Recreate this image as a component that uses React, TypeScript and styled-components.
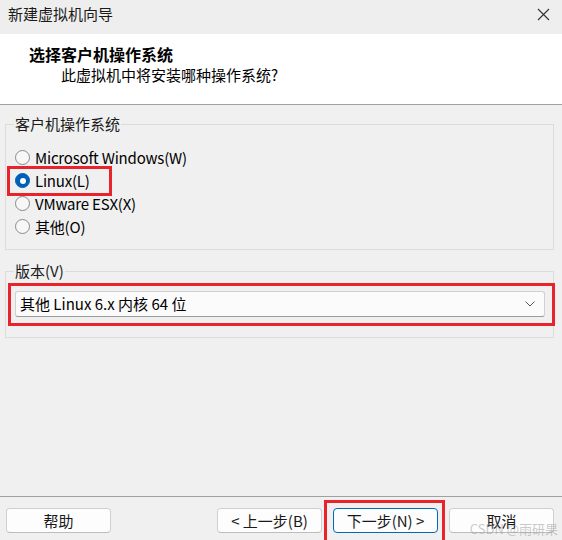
import React from "react";
import styled, { createGlobalStyle } from "styled-components";

const GlobalStyle = createGlobalStyle`
  html, body {
    margin: 0;
    padding: 0;
    background: #f0f0f0;
  }
  body {
    font-family: "Noto Sans CJK SC", "Noto Sans", sans-serif;
    color: #000;
  }
`;

const Window = styled.div`
  position: relative;
  width: 562px;
  height: 540px;
  overflow: hidden;
  display: flex;
  flex-direction: column;
  background: #f0f0f0;
  font-size: 15px;
`;

const TitleBar = styled.div`
  height: 34px;
  box-sizing: border-box;
  padding: 4px 12px 0 8px;
  display: flex;
  align-items: flex-start;
  justify-content: space-between;
  background: #eeeeee;
`;

const TitleText = styled.div`
  line-height: 20px;
  font-size: 15px;
  color: #1a1a1a;
`;

const CloseIcon = styled.svg`
  margin-top: 4px;
  width: 13px;
  height: 13px;
`;

const Header = styled.div`
  height: 71px;
  box-sizing: border-box;
  background: #ffffff;
  border-bottom: 1px solid #a0a0a0;
  padding: 10px 0 0 29px;
  display: flex;
  flex-direction: column;
  gap: 1px;
`;

const Heading = styled.div`
  font-size: 16px;
  font-weight: 700;
  line-height: 20px;
`;

const Subtitle = styled.div`
  line-height: 20px;
  padding-left: 32px;
`;

const Body = styled.div`
  flex: 1;
  padding: 9px 8px 0 5px;
  display: flex;
  flex-direction: column;
  gap: 11px;
`;

const Group = styled.fieldset<{ $padBottom: number }>`
  margin: 0;
  padding: 0 0 ${(p) => p.$padBottom}px 0;
  border: 1px solid #dcdcdc;
  border-radius: 0;
  min-width: 0;
`;

const Legend = styled.legend`
  margin-left: 8px;
  padding: 0 1px;
  line-height: 20px;
  color: #1a1a1a;
`;

const RadioList = styled.div`
  padding-top: 12px;
  display: flex;
  flex-direction: column;
`;

const RadioRow = styled.label`
  position: relative;
  height: 23px;
  display: flex;
  align-items: center;
  gap: 5px;
  padding-left: 9px;
  width: fit-content;
  line-height: 20px;
  letter-spacing: -0.2px;
`;

const RadioCircle = styled.span<{ $checked?: boolean }>`
  flex-shrink: 0;
  width: 15px;
  height: 15px;
  box-sizing: border-box;
  border-radius: 50%;
  border: 1px solid ${(p) => (p.$checked ? "#005fb8" : "#8a8a8a")};
  background: ${(p) => (p.$checked ? "#005fb8" : "#f7f7f7")};
  display: flex;
  align-items: center;
  justify-content: center;
  &::after {
    content: "";
    display: ${(p) => (p.$checked ? "block" : "none")};
    width: 6px;
    height: 6px;
    border-radius: 50%;
    background: #ffffff;
  }
`;

const RedMark = styled.span<{ $l: number; $t: number; $r: number; $b: number }>`
  position: absolute;
  left: ${(p) => p.$l}px;
  top: ${(p) => p.$t}px;
  right: ${(p) => p.$r}px;
  bottom: ${(p) => p.$b}px;
  border: 3px solid #e8232b;
  pointer-events: none;
`;

const LinuxMark = styled.span`
  position: absolute;
  left: 1px;
  top: -3px;
  width: 105px;
  bottom: -4px;
  box-sizing: border-box;
  border: 3px solid #e8232b;
  pointer-events: none;
`;

const ComboWrap = styled.div`
  position: relative;
  margin: 10px 8px 0 9px;
`;

const Combo = styled.div`
  height: 26px;
  box-sizing: border-box;
  border: 1px solid #d0d0d0;
  border-bottom-color: #9a9a9a;
  border-radius: 3px;
  background: #fbfbfb;
  display: flex;
  align-items: center;
  justify-content: space-between;
  padding: 0 9px 0 4px;
  line-height: 20px;
`;

const Chevron = styled.svg`
  width: 10px;
  height: 6px;
`;

const Footer = styled.div`
  height: 44px;
  box-sizing: border-box;
  border-top: 1px solid #a0a0a0;
  padding: 11px 8px 0 6px;
  display: flex;
  align-items: flex-start;
`;

const Spacer = styled.div`
  flex: 1;
`;

const Button = styled.button<{ $primary?: boolean; $gap?: number }>`
  position: relative;
  width: 105px;
  height: 25px;
  margin-left: ${(p) => p.$gap ?? 0}px;
  box-sizing: border-box;
  border: 1px solid ${(p) => (p.$primary ? "#0067c0" : "#d0d0d0")};
  border-bottom-color: ${(p) => (p.$primary ? "#0067c0" : "#bdbdbd")};
  border-radius: 4px;
  background: #fdfdfd;
  font-family: inherit;
  font-size: 15px;
  line-height: 20px;
  color: #1a1a1a;
  padding: 0;
  display: flex;
  align-items: center;
  justify-content: center;
`;

const Watermark = styled.div`
  position: absolute;
  right: 4px;
  bottom: 3px;
  font-size: 13px;
  line-height: 16px;
  color: rgba(150, 150, 150, 0.5);
  pointer-events: none;
`;

const options = [
  { label: "Microsoft Windows(W)", checked: false },
  { label: "Linux(L)", checked: true },
  { label: "VMware ESX(X)", checked: false },
  { label: "其他(O)", checked: false },
];

export default function App() {
  return (
    <>
      <GlobalStyle />
      <Window>
        <TitleBar>
          <TitleText>新建虚拟机向导</TitleText>
          <CloseIcon viewBox="0 0 13 13">
            <path d="M1 1 L12 12 M12 1 L1 12" stroke="#333" strokeWidth="1.1" fill="none" />
          </CloseIcon>
        </TitleBar>
        <Header>
          <Heading>选择客户机操作系统</Heading>
          <Subtitle>此虚拟机中将安装哪种操作系统?</Subtitle>
        </Header>
        <Body>
          <Group $padBottom={11}>
            <Legend>客户机操作系统</Legend>
            <RadioList>
              {options.map((o) => (
                <RadioRow key={o.label}>
                  <RadioCircle $checked={o.checked} />
                  <span>{o.label}</span>
                  {o.checked && <LinuxMark />}
                </RadioRow>
              ))}
            </RadioList>
          </Group>
          <Group $padBottom={20}>
            <Legend>版本(V)</Legend>
            <ComboWrap>
              <Combo>
                <span>其他 Linux 6.x 内核 64 位</span>
                <Chevron viewBox="0 0 10 6">
                  <path d="M0.5 0.5 L5 5 L9.5 0.5" stroke="#555" strokeWidth="1" fill="none" />
                </Chevron>
              </Combo>
              <RedMark $l={-7} $t={-8} $r={-10} $b={-9} />
            </ComboWrap>
          </Group>
        </Body>
        <Footer>
          <Button>帮助</Button>
          <Spacer />
          <Button>&lt; 上一步(B)</Button>
          <Button $primary $gap={11}>
            下一步(N) &gt;
            <RedMark $l={-10} $t={-9} $r={-8} $b={-12} />
          </Button>
          <Button $gap={11}>取消</Button>
        </Footer>
        <Watermark>CSDN @雨研果</Watermark>
      </Window>
    </>
  );
}
